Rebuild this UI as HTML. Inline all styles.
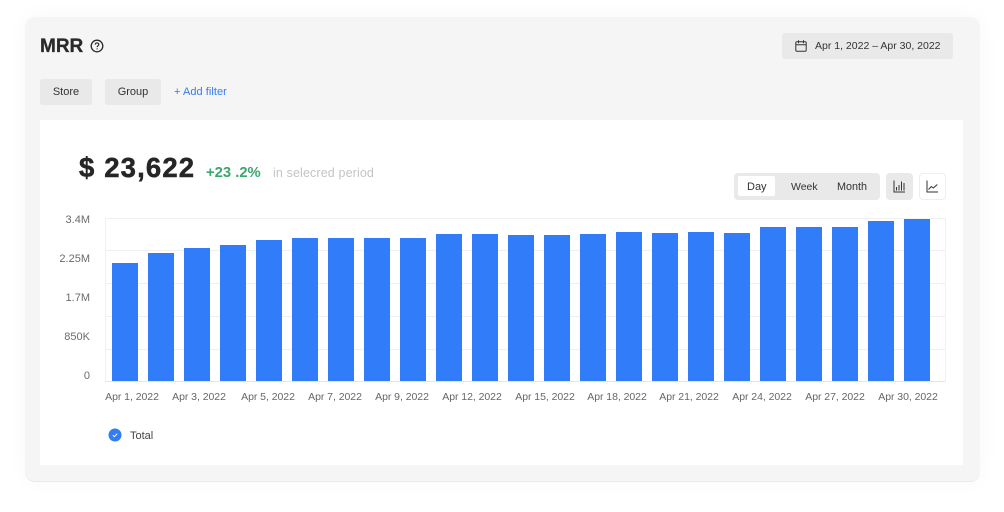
<!DOCTYPE html>
<html><head><meta charset="utf-8"><style>
html,body{margin:0;padding:0;width:1004px;height:512px;overflow:hidden;background:#fff;font-family:"Liberation Sans",sans-serif}
.a{position:absolute;white-space:nowrap}
.panel{left:25px;top:17px;width:955px;height:464px;background:#f5f5f5;border-radius:10px;box-shadow:0 0 24px rgba(0,0,0,.03),0 1px 0 #ececec}
.card{left:40px;top:120px;width:923px;height:345px;background:#fff;border-radius:2px}
.btn{background:#e9e9e9;border-radius:3px;font-size:11px;color:#333;text-align:center}
.ax{font-size:11px;color:#6b6b6b;text-align:right;width:60px;left:30px}
.xl{font-size:10.5px;color:#666;top:391px;line-height:13px;transform:translateX(-50%);letter-spacing:-.05px}
.g{left:105px;width:840px;height:1px;background:#f0f0f0}
.b{position:absolute;width:26px;bottom:131px;background:#307cf9}
</style></head><body>
<div class="a panel"></div>
<div class="a card"></div>

<div class="a" style="left:40px;top:36px;font-size:19px;line-height:22px;font-weight:700;color:#2a2a2a;-webkit-text-stroke:.3px #2a2a2a">MRR</div>
<svg class="a" style="left:90px;top:39px" width="14" height="14" viewBox="0 0 14 14" fill="none" stroke="#2a2a2a"><circle cx="7" cy="7" r="5.8" stroke-width="1.3"/><path d="M5.3 5.6c0-2.2 3.5-2.2 3.5-.1 0 1.3-1.7 1.3-1.7 2.6" stroke-width="1.2"/><path d="M7.1 9.4v1" stroke-width="1.3"/></svg>

<div class="a btn" style="left:782px;top:33px;width:171px;height:26px"></div>
<svg class="a" style="left:795px;top:40px" width="12" height="12" viewBox="0 0 12 12" fill="none" stroke="#333" stroke-width="1"><rect x=".8" y="1.8" width="10.4" height="9.4" rx="1"/><path d="M.8 4.8h10.4M3.5 .3v3M8.5 .3v3"/></svg>
<div class="a" style="left:815px;top:40px;font-size:10.5px;line-height:13px;color:#333">Apr 1, 2022 – Apr 30, 2022</div>

<div class="a btn" style="left:40px;top:79px;width:52px;height:26px;line-height:27px">Store</div>
<div class="a btn" style="left:105px;top:79px;width:56px;height:26px;line-height:27px">Group</div>
<div class="a" style="left:174px;top:86px;font-size:11px;line-height:13px;color:#2f7cf6;letter-spacing:.05px">+ Add filter</div>

<div class="a" style="left:79px;top:153px;font-size:27.5px;line-height:30px;font-weight:700;color:#262626;letter-spacing:1.15px;-webkit-text-stroke:.5px #262626">$ 23,622</div>
<div class="a" style="left:206px;top:165px;font-size:14.8px;line-height:16px;font-weight:700;color:#3aa76d">+23 .2%</div>
<div class="a" style="left:273px;top:166px;font-size:12.5px;line-height:15px;color:#c4c4c4;letter-spacing:.13px">in selecred period</div>

<div class="a" style="left:734px;top:173px;width:146px;height:27px;background:#e9e9e9;border-radius:4px"></div>
<div class="a" style="left:738px;top:176px;width:37px;height:20px;background:#fff;border-radius:2px"></div>
<div class="a" style="left:747px;top:181px;font-size:11px;line-height:13px;color:#333">Day</div>
<div class="a" style="left:791px;top:181px;font-size:10.5px;line-height:13px;color:#333">Week</div>
<div class="a" style="left:837px;top:181px;font-size:10.8px;line-height:13px;color:#333">Month</div>
<div class="a" style="left:886px;top:173px;width:27px;height:27px;background:#e9e9e9;border-radius:4px"></div>
<svg class="a" style="left:893px;top:180px" width="13" height="13" viewBox="0 0 13 13" fill="none" stroke="#333" stroke-width="1"><path d="M1 .5v11.500h11"/><path d="M3.500 10.500V7M6 10.500V5M8.500 10.500V1.500M11 10.500V3"/></svg>
<div class="a" style="left:919px;top:173px;width:25px;height:25px;background:#fff;border:1px solid #eee;border-radius:4px"></div>
<svg class="a" style="left:926px;top:180px" width="13" height="13" viewBox="0 0 13 13" fill="none" stroke="#333" stroke-width="1"><path d="M1 .5v11.500h11"/><path d="M2.500 9.500l2.800-3 2 1.500 4-3.500"/></svg>

<div class="a" style="left:105px;top:218px;width:1px;height:164px;background:#f0f0f0"></div>
<div class="a" style="left:945px;top:218px;width:1px;height:164px;background:#f0f0f0"></div>
<div class="a g" style="top:218px"></div>
<div class="a g" style="top:250px"></div>
<div class="a g" style="top:283px"></div>
<div class="a g" style="top:316px"></div>
<div class="a g" style="top:349px"></div>
<div class="a g" style="top:381px;background:#e6e6e6"></div>

<div class="a ax" style="top:214px;line-height:13px">3.4M</div>
<div class="a ax" style="top:253px;line-height:13px">2.25M</div>
<div class="a ax" style="top:292px;line-height:13px">1.7M</div>
<div class="a ax" style="top:331px;line-height:13px">850K</div>
<div class="a ax" style="top:370px;line-height:13px">0</div>

<div class="b" style="left:112px;top:263px"></div>
<div class="b" style="left:148px;top:253px"></div>
<div class="b" style="left:184px;top:248px"></div>
<div class="b" style="left:220px;top:245px"></div>
<div class="b" style="left:256px;top:240px"></div>
<div class="b" style="left:292px;top:238px"></div>
<div class="b" style="left:328px;top:238px"></div>
<div class="b" style="left:364px;top:238px"></div>
<div class="b" style="left:400px;top:238px"></div>
<div class="b" style="left:436px;top:234px"></div>
<div class="b" style="left:472px;top:234px"></div>
<div class="b" style="left:508px;top:235px"></div>
<div class="b" style="left:544px;top:235px"></div>
<div class="b" style="left:580px;top:234px"></div>
<div class="b" style="left:616px;top:232px"></div>
<div class="b" style="left:652px;top:233px"></div>
<div class="b" style="left:688px;top:232px"></div>
<div class="b" style="left:724px;top:233px"></div>
<div class="b" style="left:760px;top:227px"></div>
<div class="b" style="left:796px;top:227px"></div>
<div class="b" style="left:832px;top:227px"></div>
<div class="b" style="left:868px;top:221px"></div>
<div class="b" style="left:904px;top:219px"></div>

<div class="a xl" style="left:132px">Apr 1, 2022</div>
<div class="a xl" style="left:199px">Apr 3, 2022</div>
<div class="a xl" style="left:268px">Apr 5, 2022</div>
<div class="a xl" style="left:335px">Apr 7, 2022</div>
<div class="a xl" style="left:402px">Apr 9, 2022</div>
<div class="a xl" style="left:472px">Apr 12, 2022</div>
<div class="a xl" style="left:545px">Apr 15, 2022</div>
<div class="a xl" style="left:617px">Apr 18, 2022</div>
<div class="a xl" style="left:689px">Apr 21, 2022</div>
<div class="a xl" style="left:762px">Apr 24, 2022</div>
<div class="a xl" style="left:835px">Apr 27, 2022</div>
<div class="a xl" style="left:908px">Apr 30, 2022</div>

<svg class="a" style="left:108px;top:428px" width="14" height="14" viewBox="0 0 14 14"><circle cx="7" cy="7" r="6.500" fill="#307cf9"/><path d="M4.800 7.200l1.500 1.500 3-3" fill="none" stroke="#fff" stroke-width="1"/></svg>
<div class="a" style="left:130px;top:430px;font-size:11px;line-height:13px;color:#444">Total</div>
</body></html>
